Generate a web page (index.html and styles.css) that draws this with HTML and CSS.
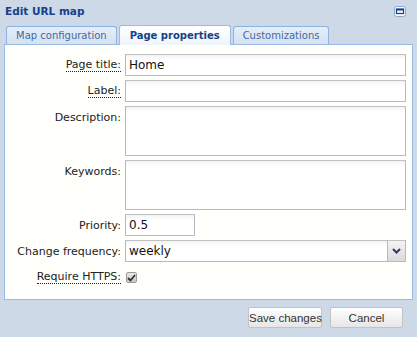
FILE: index.html
```html
<!DOCTYPE html>
<html>
<head>
<meta charset="utf-8">
<link rel="stylesheet" href="styles.css">
</head>
<body>
<div class="window">
  <div class="header">
    <span class="title">Edit URL map</span>
    <span class="max-btn"><svg width="12" height="11" viewBox="0 0 12 11"><rect x="0.5" y="0.5" width="11" height="10" rx="2" fill="#f4f7fb" stroke="#8fa8c8"/><rect x="2.5" y="3" width="7" height="4.5" fill="none" stroke="#15428b" stroke-width="1.2"/><rect x="2.5" y="3" width="7" height="1.5" fill="#15428b"/></svg></span>
  </div>
  <div class="tabs">
    <div class="tab">Map configuration</div>
    <div class="tab active">Page properties</div>
    <div class="tab">Customizations</div>
  </div>
  <div class="panel">
    <div class="form">
      <label class="lbl tip">Page title:</label>
      <div class="field"><div class="input">Home</div></div>
      <label class="lbl tip">Label:</label>
      <div class="field"><div class="input"></div></div>
      <label class="lbl">Description:</label>
      <div class="field"><div class="input area"></div></div>
      <label class="lbl">Keywords:</label>
      <div class="field"><div class="input area"></div></div>
      <label class="lbl">Priority:</label>
      <div class="field"><div class="input short">0.5</div></div>
      <label class="lbl">Change frequency:</label>
      <div class="field"><div class="input select"><span class="val">weekly</span><span class="trigger"><svg width="9" height="6" viewBox="0 0 9 6"><path d="M1 1 L4.5 4.5 L8 1" fill="none" stroke="#2b3f5c" stroke-width="2"/></svg></span></div></div>
      <label class="lbl tip">Require HTTPS:</label>
      <div class="field"><span class="check"><svg width="9" height="8" viewBox="0 0 9 8"><path d="M1 4 L3.5 6.5 L8 1" fill="none" stroke="#333" stroke-width="1.8"/></svg></span></div>
    </div>
  </div>
  <div class="buttons">
    <button class="btn save">Save changes</button>
    <button class="btn cancel">Cancel</button>
  </div>
</div>
</body>
</html>
```

FILE: styles.css
```css
html, body {
  margin: 0;
  padding: 0;
}
body {
  background: #ced9e7;
  font-family: Tahoma, "DejaVu Sans", "Liberation Sans", sans-serif;
  font-size: 11px;
  width: 417px;
  height: 337px;
  overflow: hidden;
}
.window {
  display: flex;
  flex-direction: column;
}
.header {
  height: 24px;
  display: flex;
  align-items: center;
  justify-content: space-between;
  padding: 0 11px 0 5px;
}
.title {
  font-weight: bold;
  color: #15428b;
  font-size: 10.5px;
  position: relative;
  top: -1px;
}
.max-btn {
  display: flex;
  position: relative;
  top: -1px;
}
.tabs {
  display: flex;
  align-items: flex-end;
  gap: 2px;
  padding-left: 6px;
  height: 20px;
}
.tab {
  height: 17px;
  padding: 0 9px;
  border: 1px solid #8db2e3;
  border-bottom: none;
  border-radius: 3px 3px 0 0;
  background: linear-gradient(#e6eef8, #d5e1f0);
  color: #416aa3;
  display: flex;
  align-items: center;
  font-size: 10px;
}
.tab.active {
  height: 19px;
  padding: 0 10px;
  background: linear-gradient(#ffffff, #eef4fb);
  color: #15428b;
  font-weight: bold;
  position: relative;
  top: 1px;
  border-color: #99bbe8;
  font-size: 10px;
}
.panel {
  margin: 0 4px;
  border: 1px solid #99bbe8;
  background: #fffffb;
  height: 256px;
  padding: 9px 7px 0 0;
  box-sizing: border-box;
}
.form {
  display: grid;
  grid-template-columns: 116px 1fr;
  column-gap: 4px;
  row-gap: 4px;
}
.lbl {
  justify-self: end;
  align-self: start;
  padding-top: 5px;
  color: #222;
  font-size: 11px;
  line-height: 13px;
  white-space: nowrap;
}
.lbl.tip {
  border-bottom: 1px dotted #222;
  line-height: 12px;
}
.field {
  display: flex;
}
.input {
  box-sizing: border-box;
  height: 22px;
  width: 281px;
  border: 1px solid #b5b8c8;
  border-top-color: #c0c0c0;
  background: linear-gradient(#f2f3f5 0, #ffffff 5px);
  font-family: "DejaVu Sans", sans-serif;
  font-size: 12px;
  padding: 3px 3px 0;
  color: #111;
}
.input.area {
  height: 50px;
}
.input.short {
  width: 70px;
}
.input.select {
  display: flex;
  padding: 0;
  align-items: stretch;
}
.select .val {
  flex: 1;
  padding: 3px 3px 0;
}
.select .trigger {
  width: 17px;
  border-left: 1px solid #b5b8c8;
  background: linear-gradient(#f4f4f4, #dadada);
  display: flex;
  align-items: center;
  justify-content: center;
}
.check {
  margin-top: 6px;
  margin-left: 1px;
  width: 11px;
  height: 11px;
  box-sizing: border-box;
  border: 1px solid #9a9a9a;
  border-radius: 2px;
  background: linear-gradient(#e8e8e8, #c8c8c8);
  display: flex;
  align-items: center;
  justify-content: center;
}
.buttons {
  display: flex;
  justify-content: flex-end;
  gap: 8px;
  padding: 7px 14px 0 0;
}
.btn {
  height: 21px;
  border: 1px solid #c3c3c3;
  border-radius: 2px;
  background: linear-gradient(#ffffff, #e6e6e6);
  font-family: "Liberation Sans", Arial, sans-serif;
  font-size: 11.5px;
  color: #333;
  padding: 0;
  white-space: nowrap;
}
.btn.save {
  width: 74px;
}
.btn.cancel {
  width: 73px;
}
```
